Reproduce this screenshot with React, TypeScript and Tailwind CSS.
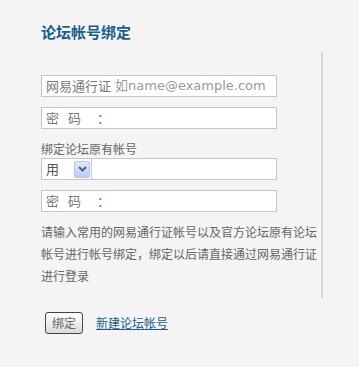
import React from "react";

const font = { fontFamily: '"DejaVu Sans", "Noto Sans CJK SC", sans-serif' };

const Field = ({ children }: { children?: React.ReactNode }) => (
  <div className="flex h-[22px] w-[236px] items-center border border-[#c6c6c6] bg-white pl-[4px] text-[13px] text-[#777]">
    {children}
  </div>
);

const Pwd = () => (
  <Field>
    <span className="w-[22px]">密</span>
    <span className="w-[29px]">码</span>
    <span>：</span>
  </Field>
);

export default function App() {
  return (
    <div
      className="h-[367px] w-full bg-[#f4f4f4] pl-[41px] pt-[22px]"
      style={{ fontFamily: '"Noto Sans CJK SC", sans-serif' }}
    >
      <h1 className="text-[15px] font-bold leading-[20px] text-[#1b5d8a]">论坛帐号绑定</h1>

      <div className="mt-[10px] h-[246px] w-[282px] border-r-2 border-[#d6d6d6] pt-[23px]">
        <Field>
          <span>网易通行证</span>
          <span className="ml-[4px] text-[#999]" style={font}>
            如name@example.com
          </span>
        </Field>
        <div className="mt-[10px]">
          <Pwd />
        </div>

        <div className="mt-[12px] text-[12px] leading-[16px] text-[#666]">绑定论坛原有帐号</div>
        <div className="mt-[1px] flex h-[22px] w-[236px] items-center border border-[#c6c6c6] bg-white">
          <div className="flex h-[20px] w-[50px] items-center border-r border-[#c6c6c6] pl-[4px] text-[13px] text-[#555]">
            <span className="flex-1">用</span>
            <span className="mr-[1px] flex h-[17px] w-[16px] items-center justify-center rounded-[2px] border border-[#b4c6ea] bg-gradient-to-b from-[#dfe9fb] to-[#b9cdf3]">
              <svg width="9" height="6" viewBox="0 0 9 6">
                <path d="M1 1 L4.5 4.5 L8 1" fill="none" stroke="#4d6185" strokeWidth="2" />
              </svg>
            </span>
          </div>
        </div>
        <div className="mt-[10px]">
          <Pwd />
        </div>

        <p className="mt-[9px] w-[277px] text-[12px] leading-[22px] text-[#666]">
          请输入常用的网易通行证帐号以及官方论坛原有论坛帐号进行帐号绑定，绑定以后请直接通过网易通行证进行登录
        </p>
      </div>

      <div className="mt-[14px] flex items-center">
        <button className="ml-[4px] h-[22px] w-[38px] rounded-[3px] border border-[#2d4863] bg-gradient-to-b from-white to-[#dcdcd6] text-[12px] text-[#666]">
          绑定
        </button>
        <a href="#" className="ml-[13px] text-[12px] text-[#1b5d8a] underline">
          新建论坛帐号
        </a>
      </div>
    </div>
  );
}
